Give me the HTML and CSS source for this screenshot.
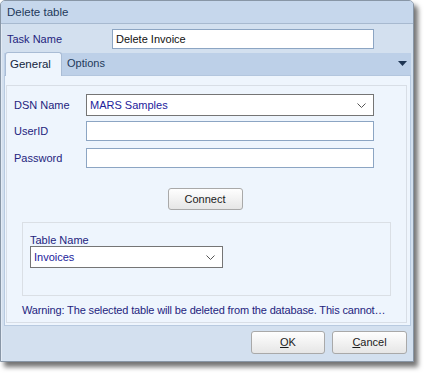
FILE: index.html
```html
<!DOCTYPE html>
<html>
<head>
<meta charset="utf-8">
<link rel="stylesheet" href="styles.css">
</head>
<body>
<div class="window">
  <div class="titlebar">Delete table</div>
  <div class="body">
    <div class="task-row">
      <span class="task-label">Task Name</span>
      <div class="textbox task-input">Delete Invoice</div>
    </div>
    <div class="tabstrip">
      <div class="tab active">General</div>
      <div class="tab">Options</div>
      <div class="tab-spacer"></div>
      <svg class="tab-menu" width="9" height="5" viewBox="0 0 9 5"><polygon points="0,0 9,0 4.5,5" fill="#1e3553"/></svg>
    </div>
    <div class="panel">
      <div class="inner">
        <div class="field-row">
          <span class="label">DSN Name</span>
          <div class="select dsn"><span class="value">MARS Samples</span>
            <svg class="chev" width="9" height="5" viewBox="0 0 9 5"><polyline points="0.5,0.5 4.5,4.5 8.5,0.5" fill="none" stroke="#555" stroke-width="1"/></svg>
          </div>
        </div>
        <div class="field-row r2">
          <span class="label">UserID</span>
          <div class="textbox field"></div>
        </div>
        <div class="field-row r3">
          <span class="label">Password</span>
          <div class="textbox field"></div>
        </div>
        <div class="connect-row">
          <div class="btn connect">Connect</div>
        </div>
        <div class="group">
          <div class="group-label">Table Name</div>
          <div class="select table"><span class="value">Invoices</span>
            <svg class="chev" width="9" height="5" viewBox="0 0 9 5"><polyline points="0.5,0.5 4.5,4.5 8.5,0.5" fill="none" stroke="#555" stroke-width="1"/></svg>
          </div>
        </div>
        <div class="warning">Warning: The selected table will be deleted from the database. This cannot…</div>
      </div>
    </div>
    <div class="footer">
      <div class="btn dlg ok"><u>O</u>K</div>
      <div class="btn dlg"><u>C</u>ancel</div>
    </div>
  </div>
</div>
</body>
</html>
```

FILE: styles.css
```css
* { box-sizing: border-box; }
html, body { margin: 0; padding: 0; background: #ffffff; }
body {
  font-family: "Liberation Sans", Arial, sans-serif;
  font-size: 11px;
  width: 429px;
  height: 377px;
  overflow: hidden;
}
.window {
  width: 414px;
  height: 362px;
  border: 1px solid #8896a6;
  border-radius: 5px 5px 0 0;
  background: #d3e0ef;
  box-shadow: 4px 5px 5px rgba(0,0,0,0.55);
  display: flex;
  flex-direction: column;
}
.titlebar {
  height: 23px;
  flex: none;
  background: #c6d7ec;
  border-bottom: 1px solid #a7b9cf;
  border-radius: 4px 4px 0 0;
  color: #1e395b;
  font-size: 11.5px;
  line-height: 22px;
  padding-left: 6px;
}
.body {
  flex: 1;
  display: flex;
  flex-direction: column;
  padding: 0 2px;
  border-left: 1px solid #e3ebf5;
}
.task-row {
  display: flex;
  align-items: center;
  height: 29px;
  padding-top: 5px;
  padding-bottom: 4px;
}
.task-label {
  color: #24247e;
  width: 108px;
  padding-left: 3px;
}
.textbox {
  background: #ffffff;
  border: 1px solid #8ca5c3;
  height: 20px;
  line-height: 18px;
  padding-left: 3px;
  color: #111;
}
.task-input { width: 262px; }
.tabstrip {
  height: 23px;
  flex: none;
  display: flex;
  align-items: flex-end;
  background: #bdd0e8;
  border-bottom: 1px solid #b3c6de;
}
.tab {
  height: 23px;
  line-height: 22px;
  padding: 0 6px 0 5px;
  color: #1e395b;
}
.tab.active {
  margin-left: 1px;
  width: 57px;
  background: #eef5fd;
  border: 1px solid #a9bcd5;
  border-bottom: none;
  border-radius: 3px 3px 0 0;
  color: #14253d;
  height: 24px;
  margin-bottom: -1px;
  padding-left: 4px;
  font-size: 11.5px;
}
.tab-spacer { flex: 1; }
.tab-menu { margin: 0 4px 9px 0; }
.panel {
  height: 250px;
  flex: none;
  background: #eef5fd;
  border: 1px solid #b8cae0;
  border-top: none;
  padding: 9px 3px 2px 1px;
}
.inner {
  height: 100%;
  border: 1px solid #d8dee6;
  padding: 8px 0 0 7px;
  display: flex;
  flex-direction: column;
}
.field-row {
  display: flex;
  align-items: center;
}
.label {
  width: 72px;
  color: #24247e;
}
.select {
  background: #fff;
  border: 1px solid #757575;
  height: 22px;
  display: flex;
  align-items: center;
  padding: 0 7px 0 3px;
}
.select .value { flex: 1; color: #22229c; }
.dsn { width: 288px; }
.r2 { margin-top: 5px; }
.r3 { margin-top: 7px; }
.field { width: 288px; height: 20px; }
.connect-row {
  display: flex;
  justify-content: center;
  margin-top: 20px;
  padding-right: 10px;
}
.btn {
  background: linear-gradient(#fefefe, #e6e6e6);
  border: 1px solid #a9a9a9;
  border-radius: 3px;
  color: #1b1b1b;
  text-align: center;
}
.connect {
  width: 75px;
  height: 22px;
  line-height: 20px;
}
.group {
  margin: 12px 15px 0 8px;
  height: 74px;
  border: 1px solid #dadfe5;
  padding: 11px 0 0 7px;
}
.group-label {
  color: #24247e;
  line-height: 12px;
}
.table { width: 193px; }
.warning {
  margin-top: 8px;
  padding-left: 8px;
  color: #24247e;
  white-space: nowrap;
  letter-spacing: -0.15px;
}
.footer {
  flex: 1;
  display: flex;
  justify-content: flex-end;
  gap: 7px;
  padding: 5px 4px 0 0;
}
.dlg {
  width: 75px;
  height: 23px;
  line-height: 21px;
}
.dlg.ok { width: 74px; }
```
